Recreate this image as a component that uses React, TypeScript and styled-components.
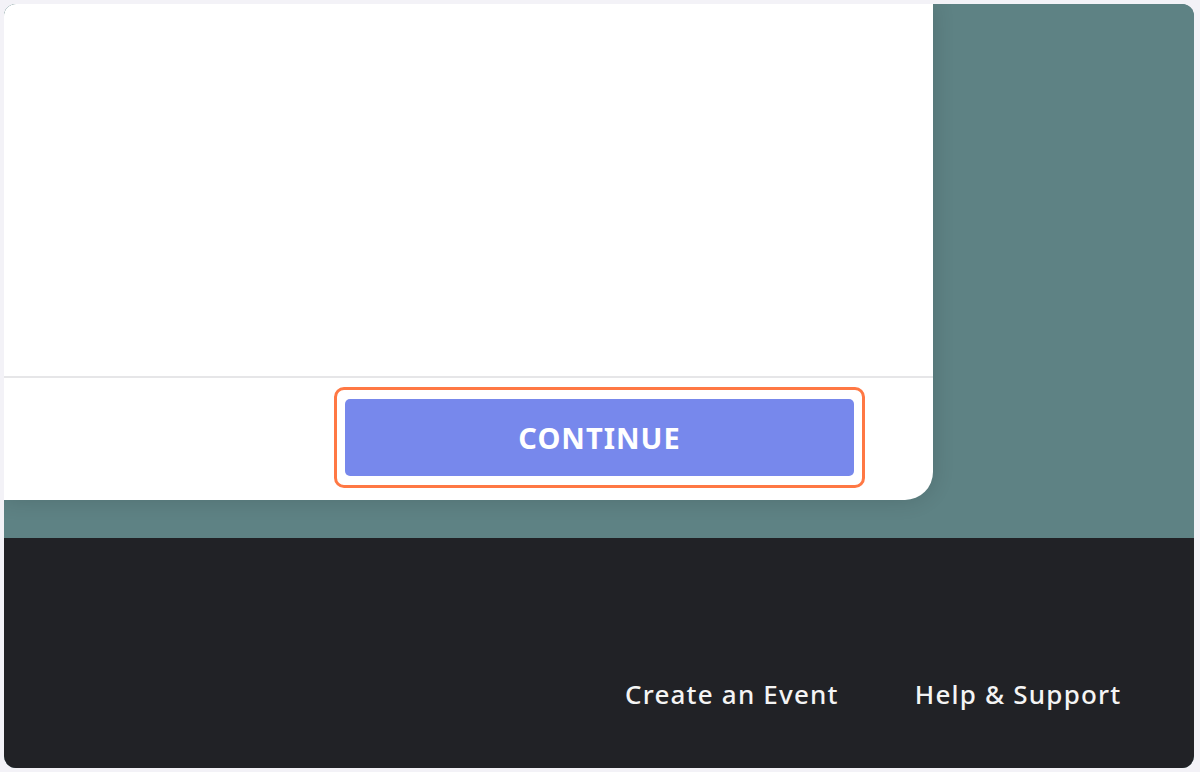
import React from 'react'
import styled, { createGlobalStyle } from 'styled-components'

const GlobalStyle = createGlobalStyle`
  html, body {
    margin: 0;
    padding: 0;
    background: #f3f2f7;
  }
  * {
    box-sizing: border-box;
  }
`

const Frame = styled.div`
  width: 1200px;
  height: 772px;
  padding: 4px 6px 4px 4px;
  background: #f3f2f7;
`

const Screen = styled.div`
  display: flex;
  flex-direction: column;
  height: 100%;
  border-radius: 12px;
  overflow: hidden;
  background: #5e8284;
`

const Stage = styled.main`
  display: flex;
  align-items: flex-start;
  height: 534px;
  background: #5e8284;
`

const Card = styled.section`
  display: flex;
  flex-direction: column;
  width: 929px;
  height: 496px;
  background: #ffffff;
  border-bottom-right-radius: 28px;
  box-shadow: 0 0 22px rgba(0, 0, 0, 0.14);
`

const CardBody = styled.div`
  flex: 1;
`

const CardFooter = styled.div`
  display: flex;
  justify-content: flex-end;
  padding: 9px 68px 12px 0;
  border-top: 2px solid #e6e6e8;
`

const Highlight = styled.div`
  display: flex;
  padding: 9px 8px;
  border: 3px solid #ff7844;
  border-radius: 10px;
`

const PrimaryButton = styled.button`
  width: 509px;
  height: 77px;
  border: none;
  border-radius: 5px;
  background: #7788ec;
  color: #ffffff;
  font-family: 'Noto Sans', 'Open Sans', sans-serif;
  font-size: 29px;
  font-weight: 700;
  letter-spacing: 1px;
  cursor: pointer;
`

const Footer = styled.footer`
  flex: 1;
  display: flex;
  gap: 76px;
  padding: 140px 0 0 621px;
  background: #212226;
  overflow: hidden;
  white-space: nowrap;
`

const FooterLink = styled.a`
  color: #f4f4f4;
  font-family: 'Noto Sans', 'Open Sans', sans-serif;
  font-size: 26px;
  font-weight: 500;
  letter-spacing: 1.2px;
  line-height: 32px;
  text-decoration: none;
`

const links = ['Create an Event', 'Help & Support', 'Privacy']

export default function App() {
  return (
    <Frame>
      <GlobalStyle />
      <Screen>
        <Stage>
          <Card>
            <CardBody />
            <CardFooter>
              <Highlight>
                <PrimaryButton>CONTINUE</PrimaryButton>
              </Highlight>
            </CardFooter>
          </Card>
        </Stage>
        <Footer>
          {links.map(link => (
            <FooterLink key={link} href="#">{link}</FooterLink>
          ))}
        </Footer>
      </Screen>
    </Frame>
  )
}
